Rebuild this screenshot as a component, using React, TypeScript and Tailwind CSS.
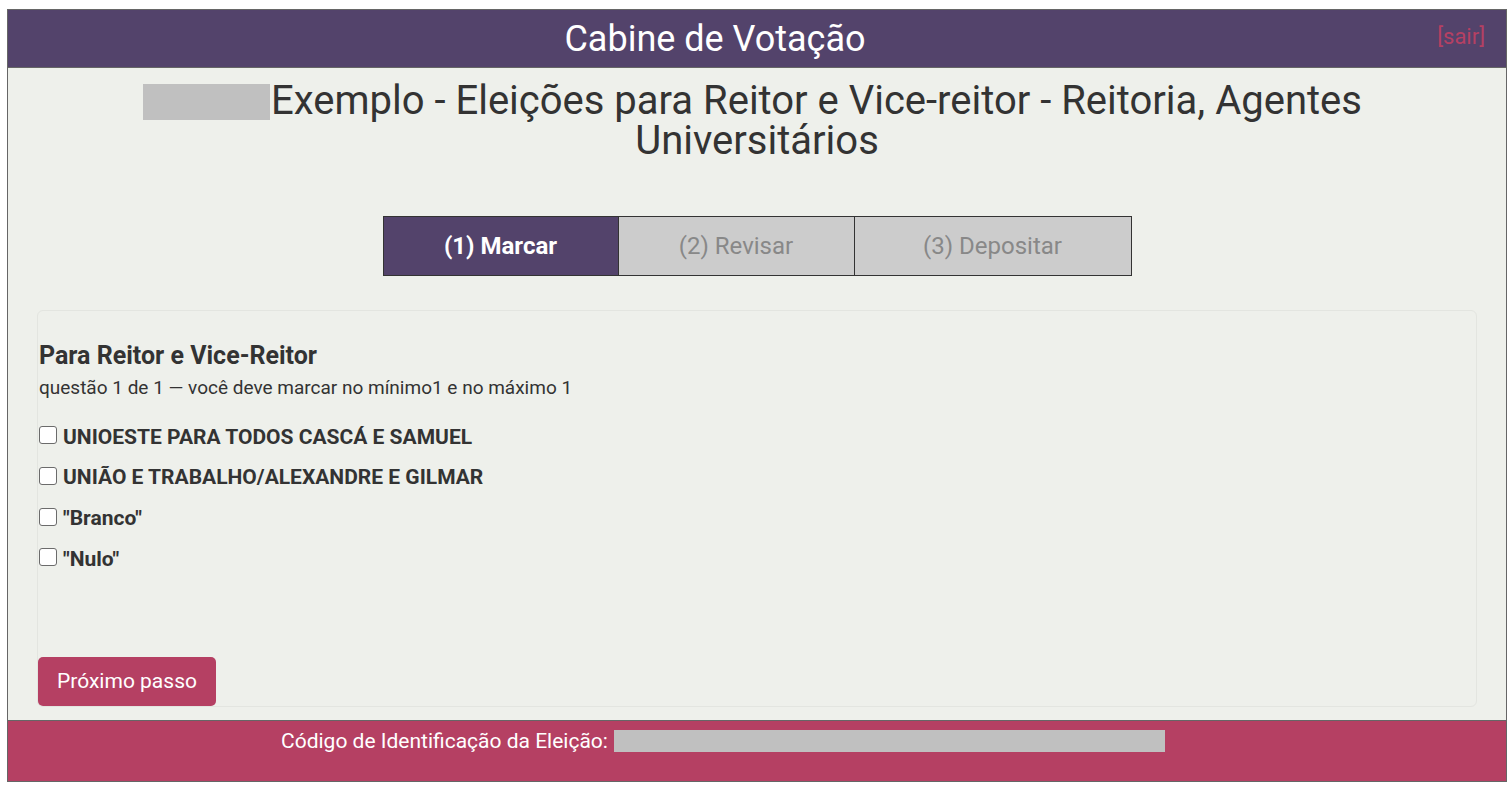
import React from "react";

const choices = [
  "UNIOESTE PARA TODOS CASCÁ E SAMUEL",
  "UNIÃO E TRABALHO/ALEXANDRE E GILMAR",
  "\"Branco\"",
  "\"Nulo\"",
];

export default function App() {
  return (
    <div className="min-h-[788px] bg-white pt-[9px] pl-[7px]" style={{ fontFamily: "Roboto, 'Liberation Sans', sans-serif" }}>
      <div className="w-[1500px] border border-[#666] bg-[#eef0eb] flex flex-col">
        {/* Header */}
        <div className="relative h-[58px] bg-[#53436b] border-b border-[#666] flex items-center justify-center pr-[84px]">
          <span className="text-[36px] text-white leading-none">Cabine de Votação</span>
          <a className="absolute right-[21px] top-[15px] text-[22px] text-[#b54063] leading-[24px]">[sair]</a>
        </div>

        {/* Title */}
        <h1 className="mt-[13px] mx-auto max-w-[1300px] text-center text-[40px] leading-[40px] text-[#333]">
          <span className="inline-block w-[127px] h-[36px] bg-[#c0c0c0] align-[-6px] ml-[-9px] mr-[1px]"></span>
          Exemplo - Eleições para Reitor e Vice-reitor - Reitoria, Agentes Universitários
        </h1>

        {/* Tabs */}
        <div className="mt-[55px] flex justify-center">
          <div className="flex border border-[#333] h-[60px]">
            <div className="w-[234px] bg-[#53436b] flex items-center justify-center text-white font-bold text-[24px]">
              (1) Marcar
            </div>
            <div className="w-[236px] bg-[#cccccc] border-l border-[#333] flex items-center justify-center text-[#888] text-[24px]">
              (2) Revisar
            </div>
            <div className="w-[277px] bg-[#cccccc] border-l border-[#333] flex items-center justify-center text-[#888] text-[24px]">
              (3) Depositar
            </div>
          </div>
        </div>

        {/* Card */}
        <div className="mt-[34px] mx-[29px] h-[397px] border border-[#e3e5e0] rounded-[6px] flex flex-col">
          <div className="pt-[29px] pl-[1px] text-[25px] leading-[32px] font-bold text-[#333]">Para Reitor e Vice-Reitor</div>
          <div className="mt-[4px] pl-[1px] text-[19px] leading-[24px] text-[#333]">
            questão 1 de 1 — você deve marcar no mínimo1 e no máximo 1
          </div>
          <div className="mt-[17px] flex flex-col">
            {choices.map((c) => (
              <div key={c} className="h-[40.7px] flex items-center pl-[1px]">
                <span className="w-[18px] h-[18px] border-[1.5px] border-[#6b6b6b] rounded-[3px] bg-white -mt-[4px]"></span>
                <span className="ml-[6px] text-[21px] font-bold text-[#333]">{c}</span>
              </div>
            ))}
          </div>
          <div className="mt-auto">
            <button className="w-[178px] h-[49px] bg-[#b54063] text-white text-[21px] rounded-[5px]">
              Próximo passo
            </button>
          </div>
        </div>

        {/* Footer */}
        <div className="mt-[13px] h-[61px] bg-[#b54063] border-t border-[#666] flex items-start pt-[9px] pl-[273px]">
          <span className="text-[21px] leading-[22px] text-white">Código de Identificação da Eleição:</span>
          <span className="ml-[6px] w-[551px] h-[22px] bg-[#c0c0c0]"></span>
        </div>
      </div>
    </div>
  );
}
